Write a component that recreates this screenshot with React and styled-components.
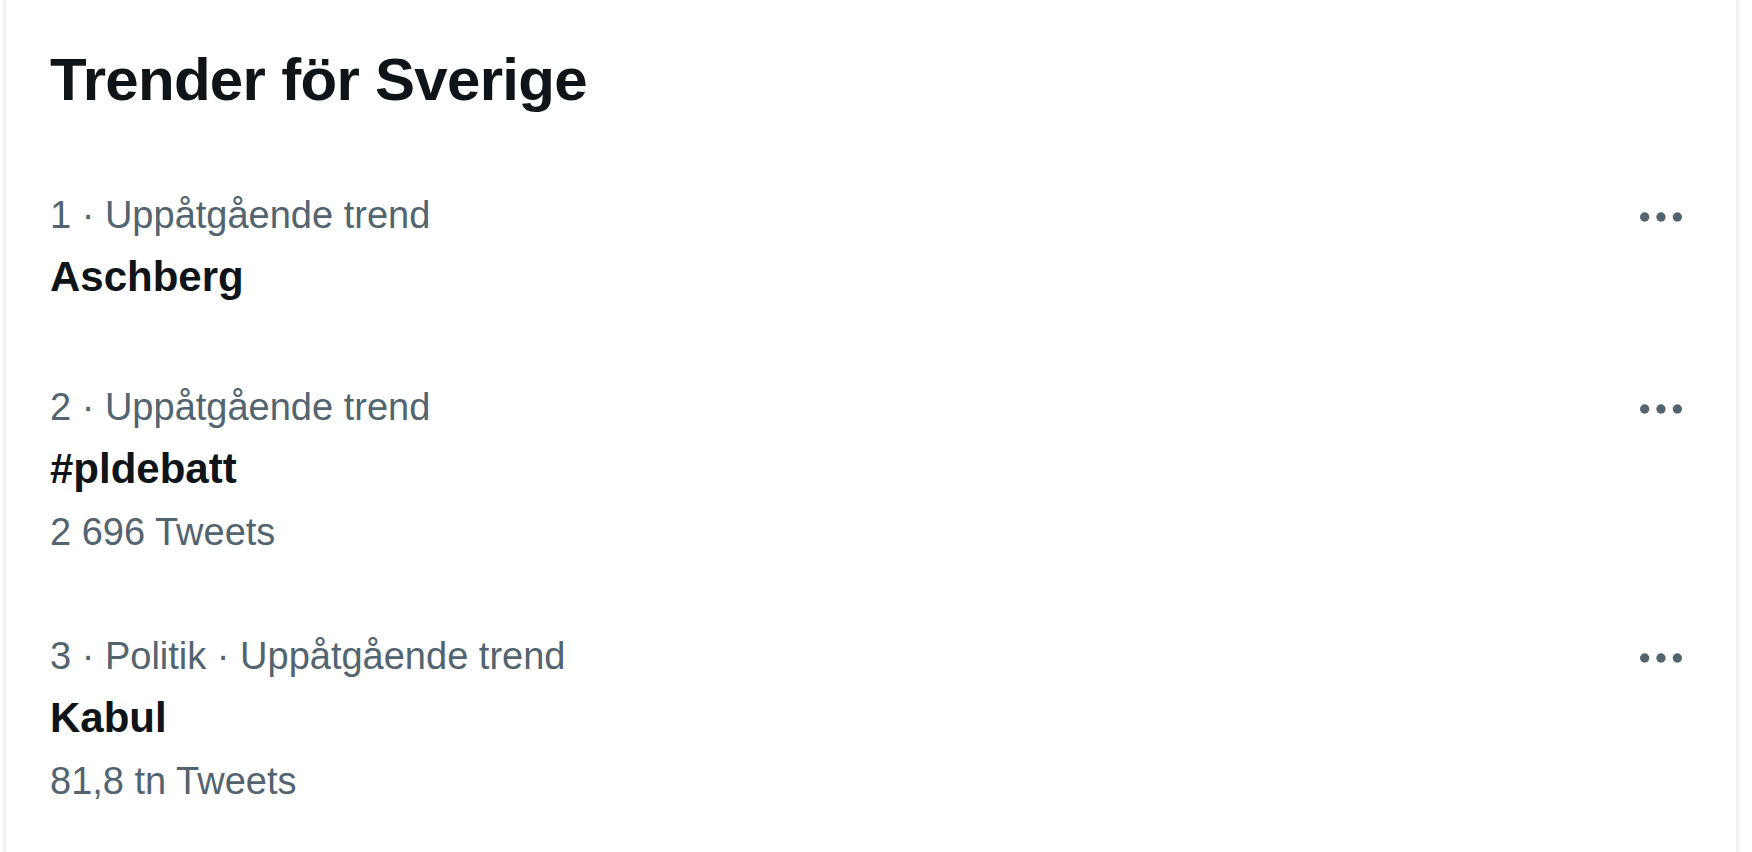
import React from 'react';
import styled, { createGlobalStyle } from 'styled-components';

const GlobalStyle = createGlobalStyle`
  html, body {
    margin: 0;
    padding: 0;
    background: #ffffff;
  }
  body {
    font-family: "Liberation Sans", Arial, sans-serif;
  }
`;

const Page = styled.div`
  width: 1752px;
  height: 852px;
  overflow: hidden;
  background: #ffffff;
`;

const Panel = styled.section`
  box-sizing: border-box;
  margin-left: 3px;
  width: 1736px;
  min-height: 852px;
  padding: 40px 47px 0 44px;
  background: #ffffff;
  border-left: 3px solid #eff3f4;
  border-right: 3px solid #eff3f4;
`;

const Title = styled.h2`
  margin: 0 0 30px;
  font-size: 60px;
  line-height: 80px;
  font-weight: 700;
  letter-spacing: -0.7px;
  color: #0f1419;
`;

const TrendRow = styled.div`
  display: flex;
  align-items: flex-start;
  padding: 36px 0 34px;
`;

const TrendText = styled.div`
  flex: 1;
  display: flex;
  flex-direction: column;
`;

const Meta = styled.div`
  font-size: 38px;
  line-height: 58px;
  color: #536471;
`;

const Name = styled.div`
  margin-top: 2px;
  font-size: 42px;
  line-height: 62px;
  font-weight: 700;
  color: #0f1419;
`;

const Count = styled.div`
  margin-top: 7px;
  font-size: 38px;
  line-height: 50px;
  color: #536471;
`;

const MoreButton = styled.button`
  flex: none;
  width: 56px;
  height: 56px;
  margin-top: 3px;
  padding: 0;
  border: none;
  background: transparent;
  color: #536471;
  display: flex;
  align-items: center;
  justify-content: center;
  cursor: pointer;
`;

const MoreIcon = () => (
  <svg width="56" height="56" viewBox="0 0 24 24" fill="currentColor">
    <circle cx="5" cy="12" r="2" />
    <circle cx="12" cy="12" r="2" />
    <circle cx="19" cy="12" r="2" />
  </svg>
);

const trends = [
  { rank: 1, meta: 'Uppåtgående trend', name: 'Aschberg' },
  { rank: 2, meta: 'Uppåtgående trend', name: '#pldebatt', count: '2 696 Tweets' },
  { rank: 3, meta: 'Politik · Uppåtgående trend', name: 'Kabul', count: '81,8 tn Tweets' },
];

const App = () => {
  return (
    <Page>
      <GlobalStyle />
      <Panel>
        <Title>Trender för Sverige</Title>
        {trends.map((t) => (
          <TrendRow key={t.rank}>
            <TrendText>
              <Meta>{t.rank} · {t.meta}</Meta>
              <Name>{t.name}</Name>
              {t.count && <Count>{t.count}</Count>}
            </TrendText>
            <MoreButton aria-label="Mer">
              <MoreIcon />
            </MoreButton>
          </TrendRow>
        ))}
      </Panel>
    </Page>
  );
};

export default App;
